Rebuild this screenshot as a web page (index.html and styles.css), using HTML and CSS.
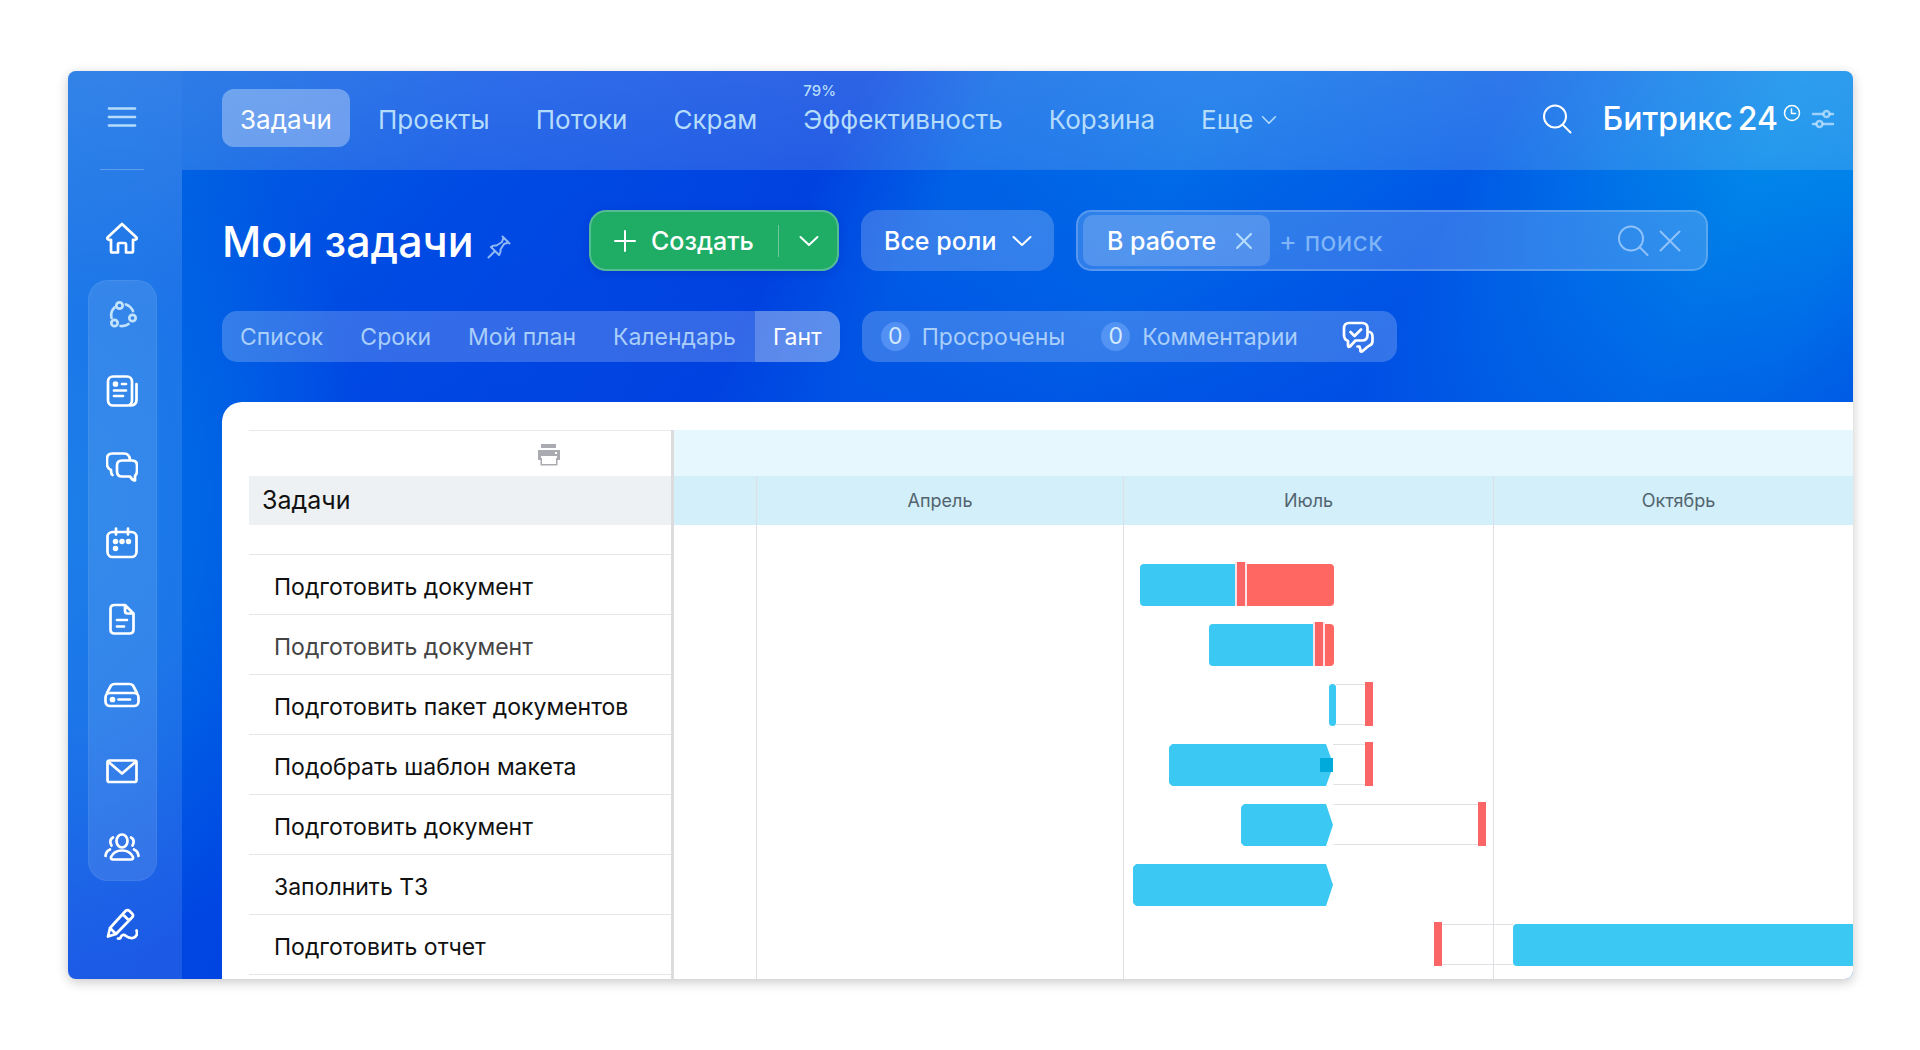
FILE: index.html
```html
<!DOCTYPE html>
<html lang="ru">
<head>
<meta charset="utf-8">
<meta name="viewport" content="width=device-width, initial-scale=1">
<title>Мои задачи</title>
<link rel="stylesheet" href="styles.css">
</head>
<body>
<div class="app">
  <aside class="sidebar">
    <button class="icon-button menu-button" aria-label="Меню">
      <svg class="icon" viewBox="0 0 32 32"><path d="M3 7.500H29M3 16H29M3 24.500H29"/></svg>
    </button>
    <hr class="divider">
    <a class="side-link home-link" href="#" aria-label="Главная">
      <svg class="icon" viewBox="0 0 32 32"><path d="M16 2 1.500 15.500Q.8 17.300 3 17.800H5V29Q5 30.500 6.500 30.500H12V22.500Q12 21 13.500 21H18.500Q20 21 20 22.500V30.500H25.500Q27 30.500 27 29V17.800H29Q31.200 17.300 30.500 15.500Z"/></svg>
    </a>
    <nav class="side-group" aria-label="Разделы">
      <a class="side-link muted" href="#" aria-label="Процессы">
        <svg class="icon" viewBox="0 0 32 32"><circle cx="13.500" cy="6.500" r="3.200"/><circle cx="26.500" cy="19" r="3.200"/><circle cx="8.500" cy="24" r="3.200"/><path d="M20 5.500Q25 7.500 27 12M8.500 8.500Q4 13 5.500 19M14.500 27Q19.500 27.500 22.500 25"/></svg>
      </a>
      <a class="side-link" href="#" aria-label="Новости">
        <svg class="icon" viewBox="0 0 32 32"><rect x="2" y="1.500" width="24" height="29" rx="5"/><path d="M30.500 9V25Q30.500 30.500 24 30.500M16 9H20M8 15.500H20M8 21H17"/><circle class="solid" cx="9.500" cy="9" r="1.500"/></svg>
      </a>
      <a class="side-link" href="#" aria-label="Чаты">
        <svg class="icon" viewBox="0 0 32 32"><path d="M6.500 24Q5 23 5 19Q1 17 1 13V8Q1 2.500 6.500 2.500H18Q23.500 2.500 24 9"/><path d="M16 9.500H26Q31 9.500 31 14.500V20Q31 23 29 25V29.500Q26 29 24 25.500H16Q11 25.500 11 20.500V14.500Q11 9.500 16 9.500Z"/></svg>
      </a>
      <a class="side-link" href="#" aria-label="Календарь">
        <svg class="icon" viewBox="0 0 32 32"><rect x="1.500" y="5" width="29" height="25" rx="5"/><path d="M10 1.500V7.500M22 1.500V7.500"/><g class="solid"><circle cx="9.500" cy="14.500" r="1.400"/><circle cx="16" cy="14.500" r="1.400"/><circle cx="22.500" cy="14.500" r="1.400"/><circle cx="9.500" cy="21.500" r="1.400"/></g></svg>
      </a>
      <a class="side-link" href="#" aria-label="Документы">
        <svg class="icon" viewBox="0 0 32 32"><path d="M8.500 2H19L27.500 10.500V26.500Q27.500 30.500 23.500 30.500H8.500Q4.500 30.500 4.500 26.500V6Q4.500 2 8.500 2ZM19 2V8Q19 10.500 21.500 10.500H27.500M11 17H21M11 23.500H18"/></svg>
      </a>
      <a class="side-link" href="#" aria-label="Диск">
        <svg class="icon wide" viewBox="-2 0 36 32"><path d="M1 14 5 6.500Q6.500 5 8.500 5H23.500Q25.500 5 27 6.500L31 14"/><rect x="-.5" y="14" width="33" height="13" rx="4.500"/><path d="M12.500 20.500H24"/><circle class="solid" cx="6.500" cy="20.500" r="1.500"/></svg>
      </a>
      <a class="side-link" href="#" aria-label="Почта">
        <svg class="icon" viewBox="0 0 32 32"><rect x="1.500" y="5.500" width="29" height="21.500" rx="2"/><path d="M2 6.500 16 18.500 30 6.500"/></svg>
      </a>
      <a class="side-link" href="#" aria-label="Сотрудники">
        <svg class="icon wide" viewBox="-2 0 36 32"><ellipse cx="16" cy="10" rx="5.500" ry="6.500"/><path d="M7 28.500Q4.500 28.500 5 26Q8 19.500 16 19.500T27 26Q27.500 28.500 25 28.500ZM7 6.500Q2.500 9 5.500 14.500M25 6.500Q29.500 9 26.500 14.500M4 18.500Q0 20 -.5 25M28 18.500Q32 20 32.500 25"/></svg>
      </a>
    </nav>
    <a class="side-link sign-link" href="#" aria-label="Подпись">
      <svg class="icon" viewBox="0 0 32 32"><path d="M2 28.500 4 20 19.500 3Q21.500 1 23.500 3L26 5.500Q28 7.500 26 9.500L10 26ZM17 6.500 22.500 12M4 20 10 26M12 30.500Q14.500 31 15 28.500Q17 25.500 20 28T27 30Q32.500 28 30.500 22.500"/></svg>
    </a>
  </aside>

  <div class="workspace">
    <header class="topbar">
      <nav class="main-nav" aria-label="Главное меню">
        <a class="nav-link active" href="#">Задачи</a>
        <a class="nav-link" href="#">Проекты</a>
        <a class="nav-link" href="#">Потоки</a>
        <a class="nav-link" href="#">Скрам</a>
        <a class="nav-link" href="#"><span class="nav-note">79%</span>Эффективность</a>
        <a class="nav-link" href="#">Корзина</a>
        <a class="nav-link" href="#">Еще <svg class="chevron small" viewBox="0 0 20 12"><path d="M2 2 10 10 18 2"/></svg></a>
      </nav>
      <div class="account">
        <button class="icon-button" aria-label="Поиск">
          <svg class="icon find" viewBox="0 0 32 32"><circle cx="14" cy="13.500" r="11"/><path d="M22 22 29.500 29.500"/></svg>
        </button>
        <a class="brand" href="#"><span>Битрикс</span> <span>24</span><svg class="clock" viewBox="0 0 18 18"><circle cx="9" cy="9" r="7.500"/><path d="M8.500 5V9.500H12.500"/></svg></a>
        <button class="icon-button settings" aria-label="Настройки">
          <svg class="icon sliders" viewBox="0 0 24 22"><path d="M2 6H12M19 6H22M2 16H5M12 16H22"/><circle cx="15.500" cy="6" r="3"/><circle cx="8.500" cy="16" r="3"/></svg>
        </button>
      </div>
    </header>

    <main class="content">
      <div class="title-row">
        <div class="title">
          <h1>Мои задачи</h1>
          <svg class="pin" viewBox="0 0 24 24"><path d="M15.500 1.500 22.500 8.500M16.500 2.500 15 7 9.500 10.500Q6 10 4 12L12 20Q14 18 13.500 14.500L17 9 21.500 7.500M8 16 1.500 22.500"/></svg>
        </div>
        <div class="create">
          <button class="create-main"><svg class="plus" viewBox="0 0 22 22"><path d="M11 1V21M1 11H21"/></svg>Создать</button>
          <button class="create-more" aria-label="Другие действия"><svg class="chevron" viewBox="0 0 20 12"><path d="M1.500 2 10 10 18.500 2"/></svg></button>
        </div>
        <div class="roles">
          <select aria-label="Роль"><option>Все роли</option></select>
          <svg class="chevron" viewBox="0 0 20 12"><path d="M1.500 2 10 10 18.500 2"/></svg>
        </div>
        <form class="filter">
          <span class="tag">В работе <button type="button" class="icon-button" aria-label="Убрать фильтр"><svg class="cross small" viewBox="0 0 22 22"><path d="M1.500 1.500 20.500 20.500M20.500 1.500 1.500 20.500"/></svg></button></span>
          <input type="text" placeholder="+ поиск" aria-label="Поиск задач">
          <button type="button" class="icon-button" aria-label="Найти"><svg class="icon find" viewBox="0 0 32 32"><circle cx="14" cy="13.500" r="12"/><path d="M23 22.500 30.500 30"/></svg></button>
          <button type="button" class="icon-button" aria-label="Сбросить"><svg class="cross" viewBox="0 0 22 22"><path d="M1.500 1.500 20.500 20.500M20.500 1.500 1.500 20.500"/></svg></button>
        </form>
      </div>

      <div class="view-row">
        <nav class="views" aria-label="Вид">
          <a href="#">Список</a>
          <a href="#">Сроки</a>
          <a href="#">Мой план</a>
          <a href="#">Календарь</a>
          <a class="active" href="#">Гант</a>
        </nav>
        <div class="counters">
          <a href="#"><span class="badge">0</span>Просрочены</a>
          <a href="#"><span class="badge">0</span>Комментарии</a>
          <button class="icon-button" aria-label="Прочитать все">
            <svg class="icon" viewBox="0 0 32 32"><path d="M7 2H20Q25.500 2 25.500 7.500V14Q25.500 19.500 20 19.500H13.500L8 25.500Q6 27 6 24V20Q2 18.500 2 14V7.500Q2 2 7 2ZM8.500 11 12.500 15 19 8.500M26 10.500Q30.500 11 30.500 15.500V20Q30.500 23.500 27.500 24.500L26 25.500L20 30.500Q18 31 18.500 29L17.500 25.500H15.500"/></svg>
          </button>
        </div>
      </div>

      <section class="gantt">
        <table class="tasks">
          <thead>
            <tr class="tools"><td><button class="icon-button" aria-label="Печать"><svg class="printer" viewBox="0 0 22 22"><path d="M3 0H18V4H3ZM0 6H22V16H19V12H3V16H0Z"/><path d="M2.500 14V21.500H19.500V14H18V20H4V14Z"/><rect class="lamp" x="17" y="8" width="2" height="2"/></svg></button></td></tr>
            <tr class="heading"><th scope="col">Задачи</th></tr>
            <tr class="spacer"><td></td></tr>
          </thead>
          <tbody>
            <tr><td>Подготовить документ</td></tr>
            <tr class="faded"><td>Подготовить документ</td></tr>
            <tr><td>Подготовить пакет документов</td></tr>
            <tr><td>Подобрать шаблон макета</td></tr>
            <tr><td>Подготовить документ</td></tr>
            <tr><td>Заполнить ТЗ</td></tr>
            <tr><td>Подготовить отчет</td></tr>
          </tbody>
        </table>
        <div class="timeline">
          <div class="months">
            <div class="month"><span></span></div>
            <div class="month"><span>Апрель</span></div>
            <div class="month"><span>Июль</span></div>
            <div class="month"><span>Октябрь</span></div>
          </div>
          <div class="lanes">
            <div class="lane"><i class="bar cut" style="margin-left:466px;width:95px"></i><i class="due glow"></i><i class="bar late" style="width:87px"></i></div>
            <div class="lane"><i class="bar cut" style="margin-left:535px;width:104px"></i><i class="due glow"></i><i class="bar late" style="width:9px"></i></div>
            <div class="lane"><i class="bar" style="margin-left:655px;width:7px"></i><i class="slack" style="width:29px"></i><i class="due"></i></div>
            <div class="lane"><i class="bar open" style="margin-left:495px;width:164px"><b class="handle"></b></i><i class="slack" style="width:32px"></i><i class="due"></i></div>
            <div class="lane"><i class="bar open" style="margin-left:567px;width:92px"></i><i class="slack" style="width:145px"></i><i class="due"></i></div>
            <div class="lane"><i class="bar open" style="margin-left:459px;width:200px"></i></div>
            <div class="lane"><i class="due" style="margin-left:760px"></i><i class="slack" style="width:71px"></i><i class="bar" style="width:360px"></i></div>
          </div>
        </div>
      </section>
    </main>
  </div>
</div>
</body>
</html>
```

FILE: styles.css
```css
* {
  box-sizing: border-box;
}

body {
  margin: 0;
  padding: 71px 67px 71px 68px;
  background: #fff;
  color: #111;
  font-family: Inter, "Liberation Sans", sans-serif;
  font-size: 23px;
  line-height: 30px;
}

a {
  color: inherit;
  text-decoration: none;
}

button,
select,
input {
  border: 0;
  padding: 0;
  background: none;
  color: inherit;
  font: inherit;
}

svg {
  display: block;
  flex: none;
  fill: none;
  stroke: currentColor;
  stroke-linecap: round;
  stroke-linejoin: round;
}

/* Shell */

.app {
  display: grid;
  grid-template-columns: 114px minmax(0, 1fr);
  height: calc(100vh - 142px);
  overflow: hidden;
  border-radius: 8px;
  box-shadow: 0 3px 12px rgba(0, 0, 0, 0.22);
  background:
    radial-gradient(ellipse 300px 460px at 0% 48%, #006ee6 0%, rgba(0, 106, 230, 0.85) 45%, rgba(0, 84, 226, 0) 100%),
    linear-gradient(180deg, rgba(0, 66, 226, 0) 80px, rgba(0, 66, 226, 0.5) 340px),
    linear-gradient(116deg, #0064e2 0%, #005ce2 9%, #004ce4 20%, #0042e0 36%, #0062e6 42%, #006ce8 52%, #005ae6 65%, #0076e8 72%, #0088ea 78%, #0084ea 83%, #005ce6 92%);
}

.icon-button {
  display: flex;
  cursor: pointer;
}

.icon {
  width: 32px;
  height: 32px;
  stroke-width: 2.7;
}

.icon.wide {
  width: 36px;
}

.solid {
  fill: currentColor;
}

/* Sidebar */

.sidebar {
  display: flex;
  flex-direction: column;
  align-items: center;
  padding: 30px 25px 0 19px;
  background: linear-gradient(rgba(255, 255, 255, 0.2), rgba(255, 255, 255, 0.11) 240px);
  color: #fff;
}

.menu-button {
  color: #b5dcfb;
}

.divider {
  width: 44px;
  margin: 36px 0 0;
  border: 0;
  border-top: 1px solid rgba(255, 255, 255, 0.25);
}

.side-link {
  display: block;
}

.home-link {
  margin: 52px 0 26px;
}

.side-group {
  display: flex;
  flex-direction: column;
  align-items: center;
  gap: 44px;
  width: 69px;
  padding: 18px 0 17px;
  border: 1px solid rgba(255, 255, 255, 0.06);
  border-radius: 20px;
  background: rgba(255, 255, 255, 0.11);
}

.muted {
  color: #c3e2fb;
}

.sign-link {
  margin-top: 27px;
}

/* Top bar */

.workspace {
  display: flex;
  flex-direction: column;
  min-width: 0;
}

.topbar {
  display: flex;
  justify-content: space-between;
  align-items: flex-start;
  height: 99px;
  padding: 18px 18px 0 40px;
  background: linear-gradient(rgba(255, 255, 255, 0.18), rgba(255, 255, 255, 0.14));
  color: #b5dcfb;
}

.main-nav {
  display: flex;
  gap: 10px;
  font-size: 26px;
}

.nav-link {
  display: flex;
  position: relative;
  align-items: center;
  gap: 8px;
  height: 58px;
  padding: 4px 18px 0;
  border-radius: 12px;
}

.nav-link.active {
  background: rgba(255, 255, 255, 0.32);
  color: #fff;
}

.nav-note {
  position: absolute;
  top: -8px;
  left: 18px;
  font-size: 15px;
  line-height: 20px;
  font-weight: 500;
}

.chevron {
  width: 20px;
  height: 12px;
  stroke-width: 2;
}

.chevron.small {
  width: 16px;
  height: 10px;
}

.account {
  display: flex;
  align-items: center;
  height: 60px;
  color: #fff;
}

.find {
  stroke-width: 2;
}

.brand {
  display: flex;
  align-items: center;
  gap: 5px;
  margin: 0 10px 0 30px;
  font-size: 32px;
  line-height: 40px;
  font-weight: 500;
}

.clock {
  width: 18px;
  height: 18px;
  margin-bottom: 12px;
  stroke-width: 1.5;
}

.settings {
  color: rgba(195, 228, 255, 0.75);
}

.sliders {
  width: 24px;
  height: 22px;
  stroke-width: 2.5;
}

/* Title row */

.content {
  display: flex;
  flex-direction: column;
  flex: 1;
  min-height: 0;
  padding: 40px 0 0 40px;
}

.title-row {
  display: flex;
  align-items: center;
  height: 61px;
  color: #fff;
  font-size: 25px;
  font-weight: 500;
}

.title {
  display: flex;
  align-items: center;
  gap: 13px;
  width: 367px;
}

h1 {
  margin: 0;
  font-size: 43px;
  line-height: 56px;
  font-weight: 500;
  white-space: nowrap;
}

.pin {
  width: 24px;
  height: 24px;
  margin-top: 12px;
  stroke-width: 2;
  color: #8fb8f5;
}

.create {
  display: flex;
  align-items: center;
  width: 250px;
  height: 61px;
  margin-right: 22px;
  border: 2px solid #55bb94;
  border-radius: 17px;
  background: #1fad66;
  box-shadow: 0 2px 8px rgba(0, 30, 160, 0.25);
}

.create-main {
  display: flex;
  align-items: center;
  gap: 15px;
  flex: 1;
  padding-left: 23px;
}

.plus {
  width: 22px;
  height: 22px;
  stroke-width: 2;
}

.create-more {
  display: flex;
  align-items: center;
  height: 32px;
  padding: 0 18px 0 20px;
  border-left: 1px solid rgba(255, 255, 255, 0.35);
}

.roles {
  display: flex;
  align-items: center;
  gap: 8px;
  width: 193px;
  height: 61px;
  margin-right: 22px;
  padding: 0 22px 0 23px;
  border-radius: 17px;
  background: rgba(255, 255, 255, 0.2);
}

.roles select {
  flex: 1;
  min-width: 0;
  appearance: none;
}

.filter {
  display: flex;
  align-items: center;
  flex: 0 1 632px;
  min-width: 0;
  height: 61px;
  padding: 0 25px 0 5px;
  border: 2px solid rgba(255, 255, 255, 0.2);
  border-radius: 15px;
  background: rgba(255, 255, 255, 0.18);
  color: #8fc2fa;
}

.tag {
  display: flex;
  align-items: center;
  justify-content: space-between;
  flex: none;
  width: 187px;
  height: 51px;
  padding: 0 18px 0 24px;
  border-radius: 10px;
  background: rgba(255, 255, 255, 0.17);
  color: #fff;
}

.tag .icon-button {
  color: #b5dcfb;
}

.filter input {
  flex: 1;
  min-width: 0;
  padding: 2px 9px 0;
  font-size: 27px;
  font-weight: 400;
  outline: 0;
}

.filter input::placeholder {
  color: #80b6f8;
  opacity: 1;
}

.cross {
  width: 22px;
  height: 22px;
  margin-left: 10px;
  stroke-width: 2;
}

.cross.small {
  width: 16px;
  height: 16px;
  margin: 0;
  stroke-width: 3;
}

/* View switcher */

.view-row {
  display: flex;
  gap: 22px;
  margin-top: 40px;
  color: #a9cefa;
}

.views,
.counters {
  display: flex;
  align-items: center;
  height: 51px;
  overflow: hidden;
  border-radius: 15px;
  background: rgba(255, 255, 255, 0.2);
}

.views {
  gap: 1px;
}

.views a {
  display: flex;
  align-items: center;
  height: 51px;
  padding: 0 18px;
}

.views .active {
  background: rgba(255, 255, 255, 0.2);
  color: #fff;
}

.counters {
  gap: 36px;
  padding: 0 23px 0 19px;
}

.counters a {
  display: flex;
  align-items: center;
  gap: 12px;
}

.counters .icon-button {
  margin-left: 8px;
  color: #fff;
}

.badge {
  width: 29px;
  height: 29px;
  border-radius: 50%;
  background: rgba(120, 175, 255, 0.45);
  color: #d5e9ff;
  line-height: 29px;
  text-align: center;
}

/* Gantt */

.gantt {
  display: flex;
  flex: 1;
  min-height: 0;
  margin-top: 40px;
  padding: 28px 0 0 27px;
  border-radius: 20px 0 0 0;
  background: #fff;
}

.tasks {
  flex: none;
  align-self: flex-start;
  width: 422px;
  border-collapse: collapse;
}

.tasks td,
.tasks th {
  padding: 4px 25px 0;
  border-bottom: 1px solid #e6e6e8;
  text-align: left;
  font-weight: 400;
}

.tasks tr {
  height: 60px;
}

.tasks .tools {
  height: 45px;
}

.tasks .tools td {
  border-top: 1px solid #e9e9eb;
  border-bottom: 0;
}

.tools .icon-button {
  margin-left: auto;
  margin-right: 86px;
}

.tasks .heading {
  height: 49px;
  background: #eef1f3;
}

.tasks .heading th {
  padding: 0 13px;
  border: 0;
  font-size: 25px;
}

.tasks .spacer {
  height: 30px;
}

.tasks .faded {
  color: #444;
}

.printer {
  width: 22px;
  height: 22px;
  fill: #a9abb0;
  stroke: none;
}

.lamp {
  fill: #fff;
}

.timeline {
  display: grid;
  flex: 1;
  grid-template: minmax(0, 1fr) / minmax(0, 1fr);
  overflow: hidden;
  border-left: 3px solid #dcdcde;
  background: linear-gradient(#e6f7fd 46px, #d2effa 46px 95px, transparent 95px);
}

.months,
.lanes {
  grid-area: 1 / 1;
}

.months {
  display: grid;
  grid-template-columns: 83px 367px 370px 370px;
  padding-top: 46px;
}

.month {
  border-right: 1px solid #dcdfe3;
  color: #53646f;
  font-size: 18px;
  line-height: 49px;
  text-align: center;
}

.lanes {
  padding-top: 124px;
}

.lane {
  display: flex;
  height: 60px;
  padding-top: 10px;
}

.lane > * {
  flex: none;
}

.bar {
  height: 42px;
  border-radius: 4px;
  background: #3bc8f3;
}

.bar.cut {
  border-radius: 4px 0 0 4px;
}

.bar.late {
  border-radius: 0 4px 4px 0;
  background: #ff6762;
}

.bar.open {
  display: flex;
  align-items: center;
  justify-content: flex-end;
  clip-path: polygon(0 3px, 3px 0, calc(100% - 7px) 0, 100% 50%, calc(100% - 7px) 100%, 3px 100%, 0 calc(100% - 3px));
}

.bar.open:has(.handle) {
  clip-path: polygon(0 3px, 3px 0, calc(100% - 7px) 0, calc(100% - 2px) 14px, 100% 14px, 100% 28px, calc(100% - 2px) 28px, calc(100% - 7px) 100%, 3px 100%, 0 calc(100% - 3px));
}

.handle {
  width: 13px;
  height: 14px;
  background: #00aadb;
}

.due {
  width: 8px;
  height: 44px;
  margin-top: -2px;
  background: #fa6666;
}

.due.glow {
  width: 12px;
  border: solid #fde3e8;
  border-width: 0 2px;
}

.slack {
  height: 41px;
  border: solid #e0e1e4;
  border-width: 1px 0;
}
```
